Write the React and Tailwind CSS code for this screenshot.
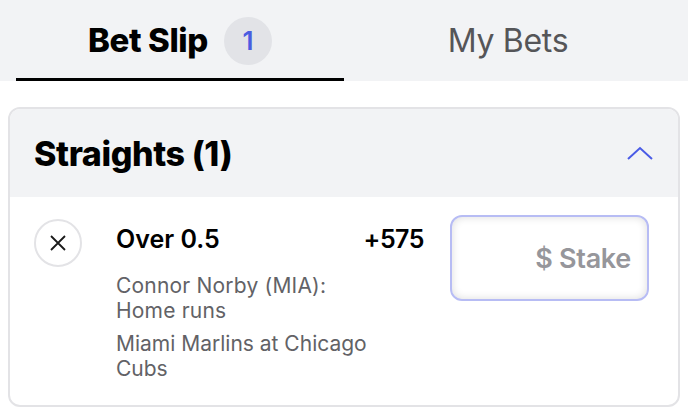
import React, { useState } from 'react';

export default function App() {
  const [tab, setTab] = useState('slip');
  const [stake, setStake] = useState('');

  return (
    <div className="w-[688px] h-[414px] bg-white overflow-hidden" style={{ fontFamily: 'Inter, "Noto Sans", sans-serif' }}>
      {/* Tabs */}
      <div className="flex h-[81px] bg-[#f2f3f5] px-4">
        <button
          onClick={() => setTab('slip')}
          className="flex-1 flex items-center justify-center gap-4 border-b-[3px] border-black pt-[3px]"
        >
          <span className="text-[33px] font-extrabold text-black tracking-[-0.4px]">Bet Slip</span>
          <span className="w-12 h-12 rounded-full bg-[#e2e3e7] flex items-center justify-center text-[26px] font-semibold text-[#4a5ce0]">1</span>
        </button>
        <button
          onClick={() => setTab('bets')}
          className="flex-1 flex items-center justify-center text-[32px] text-[#555558] tracking-[-0.3px]"
        >
          My Bets
        </button>
      </div>

      {/* Straights card */}
      <div className="mx-2 mt-[26px] border-2 border-[#e3e3e6] rounded-xl overflow-hidden">
        <div className="h-[88px] bg-[#f2f3f5] flex items-center justify-between px-[24px]">
          <h2 className="text-[34px] font-extrabold text-black tracking-[-0.4px]">Straights (1)</h2>
          <svg width="26" height="14" viewBox="0 0 26 14" fill="none" className="mr-[1px]">
            <path d="M1 13L13 2L25 13" stroke="#4a5be6" strokeWidth="2" />
          </svg>
        </div>

        <div className="flex items-start px-[24px] pt-[22px] pb-[24px]">
          <button className="w-12 h-12 shrink-0 rounded-full border-2 border-[#e3e3e6] flex items-center justify-center">
            <svg width="18" height="18" viewBox="0 0 18 18" fill="none">
              <path d="M2 2L16 16M16 2L2 16" stroke="#1a1a1a" strokeWidth="1.8" />
            </svg>
          </button>

          <div className="ml-[34px] w-[308px]">
            <div className="flex items-start justify-between pt-[5px]">
              <span className="text-[25px] font-semibold text-black leading-[30px]">Over 0.5</span>
              <span className="text-[25px] font-semibold text-black leading-[30px] tracking-[-0.5px]">+575</span>
            </div>
            <p className="mt-[19px] w-[262px] text-[21px] leading-[25px] text-[#626266] tracking-[0.2px]">Connor Norby (MIA): Home runs</p>
            <p className="mt-[8px] w-[262px] text-[21px] leading-[25px] text-[#626266]">Miami Marlins at Chicago Cubs</p>
          </div>

          <div className="ml-[26px] -mt-1 w-[199px] h-[86px] shrink-0 rounded-[12px] border-2 border-[#b7bcf4] bg-white shadow-[inset_0_0_8px_rgba(0,0,0,0.14)] flex items-center">
            <input
              value={stake}
              onChange={e => setStake(e.target.value)}
              placeholder="$ Stake"
              className="w-full h-full bg-transparent text-right pr-4 text-[27px] font-semibold text-black placeholder:text-[#96969b] outline-none tracking-[-0.3px]"
            />
          </div>
        </div>
      </div>
    </div>
  );
}
